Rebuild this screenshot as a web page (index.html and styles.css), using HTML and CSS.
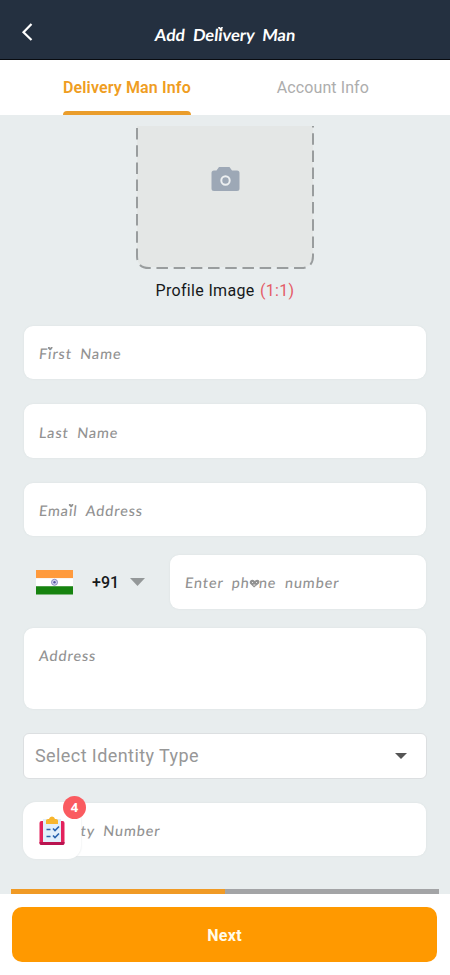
FILE: index.html
```html
<!DOCTYPE html>
<html lang="en">
<head>
<meta charset="utf-8">
<title>Add Delivery Man</title>
<link rel="stylesheet" href="styles.css">
</head>
<body>
<header class="topbar">
  <svg class="back" width="12" height="20" viewBox="0 0 12 20"><path d="M10.500 1 2.500 9.200 10.500 17" fill="none" stroke="#fff" stroke-width="2.200"/></svg>
  <h1 class="hand title">Add Del<span class="dot">i</span>very Man</h1>
</header>
<nav class="tabs">
  <div class="tab active"><span>Delivery Man Info</span></div>
  <div class="tab"><span>Account Info</span></div>
</nav>
<main class="content">
  <div class="photo">
    <svg width="180" height="144" viewBox="0 0 180 144">
      <path d="M2 0H178V131Q178 141 168 141H12Q2 141 2 131Z" fill="#e4e7e6"/>
      <path d="M2 2V130Q2 142 14 142H166Q178 142 178 130V0" fill="none" stroke="#999d9e" stroke-width="2" stroke-dasharray="11.500 5.700"/>
      <path d="M79 44.500 81.500 44.500 84 41H94.500L97 44.500H102Q104.500 44.500 104.500 47V62.500Q104.500 65 102 65H79Q76.500 65 76.500 62.500V47Q76.500 44.500 79 44.500Z" fill="#9da8b6"/>
      <circle cx="90.500" cy="54.500" r="4.200" fill="none" stroke="#eceff1" stroke-width="2"/>
    </svg>
  </div>
  <p class="caption">Profile Image <span>(1:1)</span></p>
  <div class="field f-first"><span class="hand">F<span class="dot">i</span>rst Name</span></div>
  <div class="field f-last"><span class="hand">Last Name</span></div>
  <div class="field f-email"><span class="hand">Ema<span class="dot">i</span>l Address</span></div>
  <div class="phone-row">
    <svg class="flag" width="37" height="25" viewBox="0 0 37 25"><path fill="#ff9a3c" d="M0 0h37v8.300H0z"/><path fill="#fff" d="M0 8.300h37v8H0z"/><path fill="#16830f" d="M0 16.300h37V24.500H0z"/><circle cx="18.500" cy="12.300" r="3" fill="#d5d6ee" stroke="#7576b8" stroke-width=".8"/><circle cx="18.500" cy="12.300" r="1.200" fill="#5555a5"/></svg>
    <span class="code">+91</span>
    <svg class="caret" width="15" height="8" viewBox="0 0 15 8"><path fill="#949899" d="M0 0h15L7.500 8z"/></svg>
    <div class="field f-phone"><span class="hand">Enter ph<span class="heart-o">o<svg width="11" height="9" viewBox="0 0 11 9"><path d="M5.500 8.500 1 4.500C-.5 1.500 3-.5 5.500 2 8-.5 11.500 1.500 10 4.500Z" fill="#929292"/><path d="M3 3h1v1H3zM7 3h1v1H7zM4.500 5.500h2v1h-2z" fill="#eee"/></svg></span>ne number</span></div>
  </div>
  <div class="field f-address"><span class="hand">Address</span></div>
  <div class="select"><span>Select Identity Type</span><svg width="12" height="6" viewBox="0 0 12 6"><path fill="#555" d="M0 0h12L6 6z"/></svg></div>
  <div class="field f-number"><span class="hand">Identity Number</span>
    <div class="task">
      <svg width="26" height="30" viewBox="0 0 26 30">
        <rect x=".5" y="5" width="25" height="24" rx="2" fill="#e3225c"/>
        <path d="M.5 26h25v1q0 2-2 2h-21q-2 0-2-2z" fill="#b91450"/>
        <path d="M4 3h18v23H4z" fill="#e1effb"/>
        <path d="M7 8V4.500Q7 3 9 3h1q.5-2.500 3-2.500T16 3h1q2 0 2 1.500V8z" fill="#f8b62d"/>
        <path d="M7.500 13.500h4M7.500 20.500h4M14 12.500l2 2 4-4M14 19.500l2 2 4-4" fill="none" stroke="#2862ad" stroke-width="1.600"/>
      </svg>
      <b class="badge">4</b>
    </div>
  </div>
  <div class="progress"><div class="progress-done"></div></div>
</main>
<footer class="footer"><div class="next">Next</div></footer>
</body>
</html>
```
FILE: styles.css
```css
* { box-sizing: border-box; }
body { margin: 0; width: 450px; height: 975px; overflow: hidden; font-family: Roboto, sans-serif; background: #fff; display: flex; flex-direction: column; }
.topbar { height: 60px; background: #243040; border-bottom: 1px solid #080b10; display: flex; align-items: center; padding: 6px 21px 0; flex: none; }
.back { flex: none; }
.hand { font-family: Lato, sans-serif; font-weight: 500; font-size: 14.500px; letter-spacing: .85px; word-spacing: 4px; color: #929292; white-space: nowrap; line-height: 20px; transform: skewX(-6deg); }
.title { margin: 4px 0 0 122px; font-size: 16.500px; font-weight: 700; color: #fff; letter-spacing: 0; word-spacing: 4px; }
.dot { position: relative; }
.dot::before { content: ""; position: absolute; left: -1px; top: 2px; width: 5px; height: 3px; background: currentColor; clip-path: polygon(0 0, 35% 0, 50% 35%, 65% 0, 100% 0, 100% 40%, 50% 100%, 0 40%); }
.tabs { height: 55px; flex: none; display: flex; justify-content: space-between; padding: 0 81px 0 63px; }
.tab { height: 55px; padding-top: 18px; font-size: 16px; line-height: 20px; color: #adadad; white-space: nowrap; letter-spacing: .1px; }
.active { width: 128px; color: #ef9d22; font-weight: 600; letter-spacing: .14px; display: flex; flex-direction: column; justify-content: space-between; }
.active::after { content: ""; height: 4px; background: #ea9d2b; border-radius: 4px 4px 0 0; }
.content { height: 779px; flex: none; background: #e8edee; padding: 11px 11px 0; }
.photo { display: flex; justify-content: center; height: 144px; }
.caption { margin: 10px 0 0; height: 21px; line-height: 21px; text-align: center; font-size: 16px; letter-spacing: .33px; color: #16191b; }
.caption span { color: #e45b66; margin-left: 1px; }
.field { position: relative; margin: 0 13px; height: 53px; background: #fff; border-radius: 9px; box-shadow: 0 0 2px #d8dfdf; display: flex; align-items: center; padding: 3px 16px 0 15px; }
.f-first { margin-top: 25px; }
.f-last { margin-top: 25px; height: 54px; }
.f-email { margin-top: 25px; }
.phone-row { margin: 19px 13px 0 25px; display: flex; align-items: center; height: 54px; }
.flag { flex: none; }
.code { width: 28px; margin-left: 19px; font-size: 16px; font-weight: 500; color: #16191b; }
.caret { margin-left: 10px; flex: none; }
.f-phone { margin: 0 0 0 25px; flex: 1; height: 54px; padding-top: 2px; }
.heart-o { position: relative; color: transparent; }
.heart-o svg { position: absolute; left: -1px; top: 5px; }
.f-address { margin-top: 19px; height: 81px; align-items: flex-start; padding-top: 18px; }
.select { margin: 24px 12px 0; height: 46px; border: 1px solid #dcdfe1; border-radius: 6px; background: #fff; display: flex; align-items: center; justify-content: space-between; padding: 0 19px 1px 11px; font-size: 18px; letter-spacing: .42px; color: #979797; }
.f-number { margin-top: 24px; }
.task { position: absolute; left: -1px; top: -1px; width: 58px; height: 57px; border-radius: 13px; background: #fff; box-shadow: 0 0 2px #dfe3e4; display: flex; align-items: center; justify-content: center; }
.badge { position: absolute; left: 40px; top: -6px; width: 23px; height: 23px; border-radius: 50%; background: #fa5b60; color: #fff; font: 700 13px/23px "Open Sans", sans-serif; text-align: center; }
.progress { margin-top: 33px; height: 5px; background: #a3a4a6; }
.progress-done { width: 50%; height: 5px; background: #f09a25; }
.footer { padding: 13px 13px 0 12px; }
.next { height: 55px; border-radius: 10px; background: #ff9900; color: #fffbea; font-size: 16px; font-weight: 700; line-height: 57px; text-align: center; letter-spacing: .3px; }
```
